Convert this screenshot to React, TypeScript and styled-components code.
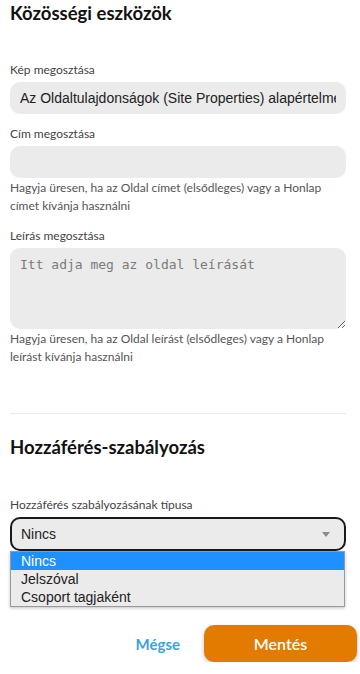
import React from 'react';
import styled, { createGlobalStyle } from 'styled-components';

const GlobalStyle = createGlobalStyle`
  body {
    margin: 0;
    background: #ffffff;
    font-family: Lato, 'Noto Sans', sans-serif;
  }
`;

const options = ['Nincs', 'Jelszóval', 'Csoport tagjaként'];

function App() {
  return (
    <>
      <GlobalStyle />
      <Page>
        <Heading>Közösségi eszközök</Heading>

        <Field $top={38}>
          <Label>Kép megosztása</Label>
          <TextInput
            readOnly
            value="Az Oldaltulajdonságok (Site Properties) alapértelmezett képe"
          />
        </Field>

        <Field $top={12}>
          <Label>Cím megosztása</Label>
          <TextInput readOnly value="" />
          <Helper>
            Hagyja üresen, ha az Oldal címet (elsődleges) vagy a Honlap címet
            kívánja használni
          </Helper>
        </Field>

        <Field $top={13}>
          <Label>Leírás megosztása</Label>
          <TextArea placeholder="Itt adja meg az oldal leírását" />
          <Helper>
            Hagyja üresen, ha az Oldal leírást (elsődleges) vagy a Honlap
            leírást kívánja használni
          </Helper>
        </Field>

        <Divider />

        <Heading>Hozzáférés-szabályozás</Heading>

        <Field $top={39}>
          <Label>Hozzáférés szabályozásának típusa</Label>
          <SelectWrap>
            <SelectBox>
              <span>Nincs</span>
              <Caret />
            </SelectBox>
            <OptionList>
              {options.map((o, i) => (
                <OptionItem key={o} $active={i === 0}>
                  {o}
                </OptionItem>
              ))}
            </OptionList>
          </SelectWrap>
        </Field>

        <Actions>
          <CancelButton>Mégse</CancelButton>
          <SaveButton>Mentés</SaveButton>
        </Actions>
      </Page>
    </>
  );
}

export default App;

const Page = styled.div`
  width: 360px;
  box-sizing: border-box;
  padding: 2px 14px 0 10px;
`;

const Heading = styled.h2`
  margin: 0;
  font-family: Lato, sans-serif;
  font-size: 18.5px;
  line-height: 22px;
  font-weight: 700;
  color: #111111;
`;

const Field = styled.div<{ $top: number }>`
  margin-top: ${({ $top }) => $top}px;
  display: flex;
  flex-direction: column;
`;

const Label = styled.label`
  font-family: Lato, sans-serif;
  font-size: 12px;
  line-height: 16px;
  color: #444444;
  margin-bottom: 4px;
`;

const TextInput = styled.input`
  box-sizing: border-box;
  width: 100%;
  height: 32px;
  border: none;
  outline: none;
  border-radius: 10px;
  background: #ebebeb;
  padding: 0 10px;
  font-family: 'Liberation Sans', Arial, sans-serif;
  font-size: 14px;
  color: #222222;
`;

const TextArea = styled.textarea`
  box-sizing: border-box;
  width: 100%;
  height: 81px;
  border: none;
  outline: none;
  border-radius: 10px;
  background: #ebebeb;
  padding: 9px 10px;
  font-family: 'DejaVu Sans Mono', 'Liberation Mono', monospace;
  font-size: 13px;
  color: #222222;
  resize: vertical;
  display: block;

  &::placeholder {
    color: #7a7a7a;
  }
`;

const Helper = styled.p`
  margin: 1px 0 0;
  font-family: Lato, sans-serif;
  font-size: 12px;
  line-height: 18px;
  color: #555555;
`;

const Divider = styled.hr`
  margin: 47px 0 22px;
  border: none;
  border-top: 1px solid #ececec;
`;

const SelectWrap = styled.div`
  position: relative;
`;

const SelectBox = styled.div`
  box-sizing: border-box;
  height: 34px;
  border: 2px solid #1a1a1a;
  border-radius: 10px;
  background: #ebebeb;
  display: flex;
  align-items: center;
  justify-content: space-between;
  padding: 0 14px 0 9px;
  font-family: 'Liberation Sans', Arial, sans-serif;
  font-size: 14px;
  color: #222222;
`;

const Caret = styled.span`
  width: 0;
  height: 0;
  border-left: 4px solid transparent;
  border-right: 4px solid transparent;
  border-top: 5px solid #8a8a8a;
`;

const OptionList = styled.ul`
  position: absolute;
  top: 100%;
  left: 0;
  right: 1px;
  margin: 0;
  padding: 0;
  list-style: none;
  background: #ebebeb;
  border: 1px solid #9a9a9a;
  box-shadow: 0 1px 3px rgba(0, 0, 0, 0.25);
`;

const OptionItem = styled.li<{ $active: boolean }>`
  height: 18px;
  line-height: 18px;
  padding: 0 10px;
  font-family: 'Liberation Sans', Arial, sans-serif;
  font-size: 14px;
  background: ${({ $active }) => ($active ? '#1e90ff' : 'transparent')};
  color: ${({ $active }) => ($active ? '#ffffff' : '#222222')};
`;

const Actions = styled.div`
  margin: 74px -11px 0 0;
  display: flex;
  justify-content: flex-end;
  align-items: center;
`;

const CancelButton = styled.button`
  border: none;
  background: transparent;
  padding: 0 24px;
  font-family: Lato, sans-serif;
  font-weight: 700;
  font-size: 15px;
  color: #3ba3dc;
  cursor: pointer;
`;

const SaveButton = styled.button`
  width: 153px;
  height: 37px;
  border: none;
  border-radius: 10px;
  background: #e27b00;
  box-shadow: 0 2px 4px rgba(0, 0, 0, 0.25);
  font-family: Lato, sans-serif;
  font-weight: 600;
  font-size: 16px;
  color: #ffffff;
  cursor: pointer;
`;
